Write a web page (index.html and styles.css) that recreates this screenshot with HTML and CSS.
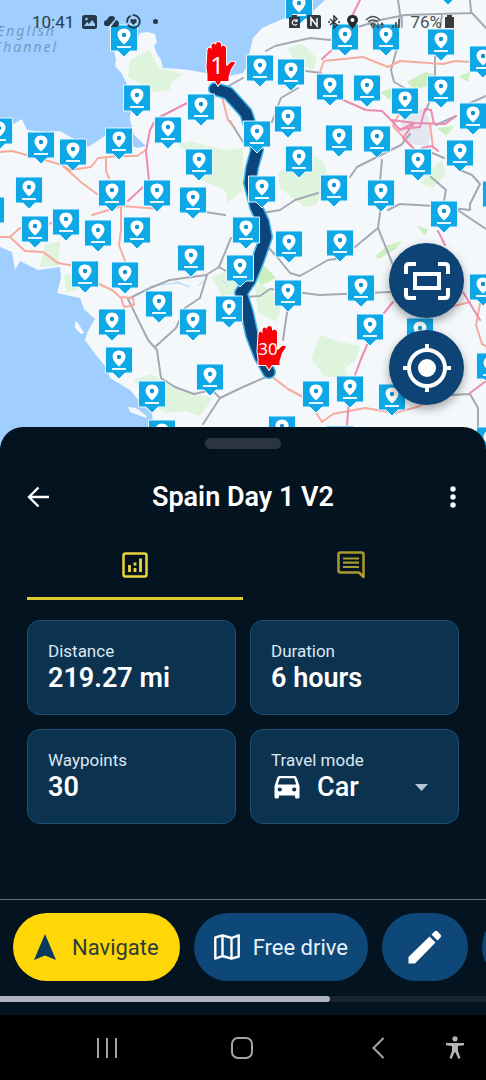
FILE: index.html
```html
<!DOCTYPE html>
<html lang="en">
<head>
    <meta charset="UTF-8">
    <meta name="viewport" content="width=device-width, initial-scale=1">
    <title>Spain Day 1 V2</title>
    <link rel="stylesheet" href="styles.css">
</head>
<body>

    <section class="map">
        <svg class="map-canvas" viewBox="0 0 486 457" preserveAspectRatio="xMidYMin slice" role="img" aria-label="Route map">
            <defs>
                <g id="m">
                    <path d="M-13.5 0H13.5V26H6L0 32L-6 26H-13.5Z" fill="#0fa8e6" stroke="#e4f6ff" stroke-width="1"/>
                    <path d="M0 3.5C-3.9 3.5-6.5 6.3-6.5 9.8C-6.5 14 0 19.5 0 19.5S6.5 14 6.5 9.8C6.5 6.3 3.9 3.5 0 3.5Z" fill="#fff"/>
                    <circle cx="0" cy="10" r="2.2" fill="#0f94d0"/>
                    <path d="M-7 22H7" stroke="#fff" stroke-width="1.8"/>
                </g>
                <path id="hand" d="M2.5 8Q3 5.5 4.5 5.5Q6 5.5 6.5 8V3.5Q7 1.5 8.5 1.5Q10.5 1.5 10.8 3.5V2Q11.5 0 13.5 0Q15.5 0 16 2V5Q17 3.5 18.5 3.5Q20.5 3.5 21 6V23L22 24L26 20Q28.5 19 30 21L26 27L23.5 35V39H16L13 43.5L10 39H2.5V33L1.5 25Z"/>
            </defs>

            <rect width="486" height="457" fill="#f5f8fb"/>

            <!-- water -->
            <g fill="#9fceff">
                <path d="M0 0H325L312 12L285 18L262 28L253 38L249 55L246 68L243 73L225 77L195 71L180 69L163 68L161 60L156 52L154 46L157 42L155 34L148 32L140 33L137 40L120 34L109 27L113 45L116 60L115 66L122 74L127 84L131 105L130 120L134 135L146 146L137 148L120 140L105 136L88 147L60 131L45 132L27 130L22 119L12 125L0 128Z"/>
                <path d="M0 247L12 252L15 270L20 261L38 270L60 267L61 278L57 293L80 298L84 309L95 319L88 331L85 340L96 355L105 366L110 378L130 390L140 402L152 414L158 457H0Z"/>
            </g>
            <g fill="#f5f8fb">
                <path d="M75 321L78 323L84 333L81 334L75 328Z"/>
                <path d="M128 407L136 408L147 416L146 418L130 412Z"/>
            </g>

            <!-- forests and parks -->
            <g fill="#dff4dd">
                <path d="M130 60L150 50L158 67L184 74L172 81L170 90L154 92L140 84L128 77Z"/>
                <path d="M178 145L190 141L208 146L225 150L243 148V190L228 203L225 190L200 180L192 156Z"/>
                <path d="M278 172L300 164L312 154L325 164L328 182L316 205L305 207L280 188Z"/>
                <path d="M45 245L60 241L58 266L40 267Z M64 275L78 273L82 288L66 293Z"/>
                <path d="M133 380L150 374L175 386L192 393L213 398L200 416L185 411L167 413L150 404Z"/>
                <path d="M211 277L225 272L240 279L236 294L222 296Z"/>
                <path d="M320 335L338 341L360 346L356 360L345 368L348 377L325 377L311 359Z"/>
                <path d="M254 280L270 290L282 305L276 322L258 312Z"/>
                <path d="M288 48L302 44L317 58L314 70L295 64Z M430 170L442 160L446 175L432 188L420 184Z"/>
            </g>
            <g fill="#cdeec0">
                <path d="M407 82L425 72L436 74L432 84L415 90Z M458 76L470 72L468 82Z M380 92L394 88L390 100Z M437 128L454 126L446 136Z"/>
                <path d="M254 277L264 265L276 278L262 285Z M376 256L388 245L402 241L396 249L378 259Z M417 226L428 229L425 236Z"/>
            </g>
            <path d="M404 112L424 108L432 126L428 146L410 144L400 130Z" fill="#e3e7f1"/>
            <g class="stream">
                <path d="M150 286L178 283L190 287M175 281L190 287M198 286L204 281M222 280L228 286"/>
            </g>

            <!-- roads -->
            <g class="road trunk">
                <path d="M266 51L275 46L310 38L330 40L352 29L380 20L405 15L472 13L486 28M398 0L400 14L398 45L391 70L394 82L408 90M470 0L471 12M442 15L435 58V90L425 112M306 71L321 73"/>
                <path d="M225 88L243 78M230 121L243 142M298 88L281 98L272 122M486 96L468 104M456 116L436 125"/>
                <path d="M410 134L401 145L387 152L357 167L350 177M318 193L295 200L280 210L262 213M382 160L380 181V213L378 228L395 270M388 210L400 204L434 206L470 210M430 152L444 158M460 170L472 175L480 184L470 204V210M431 177L446 190L444 201L486 229"/>
                <path d="M205 212L225 215M231 238L219 267L206 275L170 280L150 288L128 299M207 275L200 298L185 308L176 328L155 347M128 299L148 340L157 350L161 378L175 387L194 394L212 390L220 398L203 424M220 398L243 387L266 377M219 267L233 275L241 290M266 245L278 258L290 273L300 276L328 260L343 258M355 247L378 228M245 297L260 296L270 289L320 295L390 292M288 306L283 340M451 395L470 394L478 408V430"/>
            </g>
            <g class="road main">
                <path d="M0 152L12 151L45 160L62 165L70 170L91 167L98 158L119 156L137 156L146 150M62 165L82 183L97 194M106 158V171L109 178M92 215L122 206L160 209M121 207V230L119 245L125 261M0 237L10 237L25 251L43 252L58 263L75 266M10 237L20 228L60 222M97 283L112 290L120 297L133 298L134 305L124 307L121 298M221 93L228 120L232 125M320 72L324 61L363 57L388 67L400 61L443 64L455 61L470 62"/>
                <path d="M266 372L288 389L303 397L315 411L322 422L333 414L365 408L395 413L420 406L435 395M481 298L476 325L482 344L486 346M450 307L470 302M400 112L393 126L415 150M430 124L433 148"/>
            </g>
            <g class="road motorway">
                <path d="M128 201L143 187M149 181L146 151L150 130L156 119L189 102L200 95M360 0L353 14M322 59L334 48M343 100L366 110L382 111L391 120L415 123L445 124L456 116M391 120L400 130L414 123L403 138L415 150M400 129L420 127L425 109L431 110L434 124M422 148L432 146L438 151M367 345L361 359L355 375M349 400L347 425M393 302L384 313M463 292L480 320M438 231L445 245M486 381L470 393"/>
            </g>

            <!-- planned route -->
            <path class="route-edge" d="M215 89L228 93L238 104L246 113L251 128L257 150L252 168L250 183L256 207L263 222L266 237L258 260L250 280L241 293L247 312L252 335L260 356L269 372"/>
            <path class="route-line" d="M215 89L228 93L238 104L246 113L251 128L257 150L252 168L250 183L256 207L263 222L266 237L258 260L250 280L241 293L247 312L252 335L260 356L269 372"/>
            <circle cx="269" cy="372" r="5" fill="#124678"/>

            <text class="sea-label" x="-3" y="36">English</text>
            <text class="sea-label" x="-7" y="52">Channel</text>

            <!-- waypoint markers -->
            <use href="#m" x="124" y="25"/><use href="#m" x="137" y="85"/><use href="#m" x="201" y="94"/>
            <use href="#m" x="168" y="117"/><use href="#m" x="119" y="128"/><use href="#m" x="-1" y="118"/>
            <use href="#m" x="41" y="132"/><use href="#m" x="73" y="139"/><use href="#m" x="199" y="149"/>
            <use href="#m" x="29" y="177"/><use href="#m" x="112" y="180"/><use href="#m" x="157" y="180"/>
            <use href="#m" x="193" y="187"/><use href="#m" x="-9" y="197"/><use href="#m" x="66" y="209"/>
            <use href="#m" x="299" y="-7"/><use href="#m" x="448" y="-27"/><use href="#m" x="345" y="24"/>
            <use href="#m" x="386" y="24"/><use href="#m" x="441" y="29"/><use href="#m" x="483" y="46"/>
            <use href="#m" x="260" y="55"/><use href="#m" x="291" y="59"/><use href="#m" x="330" y="74"/>
            <use href="#m" x="367" y="75"/><use href="#m" x="405" y="88"/><use href="#m" x="441" y="76"/>
            <use href="#m" x="473" y="103"/><use href="#m" x="288" y="106"/><use href="#m" x="257" y="121"/>
            <use href="#m" x="339" y="125"/><use href="#m" x="377" y="126"/><use href="#m" x="460" y="140"/>
            <use href="#m" x="418" y="149"/><use href="#m" x="299" y="146"/><use href="#m" x="262" y="176"/>
            <use href="#m" x="334" y="175"/><use href="#m" x="381" y="180"/><use href="#m" x="496" y="181"/>
            <use href="#m" x="444" y="201"/><use href="#m" x="35" y="216"/><use href="#m" x="98" y="220"/>
            <use href="#m" x="137" y="217"/><use href="#m" x="246" y="217"/><use href="#m" x="191" y="245"/>
            <use href="#m" x="240" y="255"/><use href="#m" x="85" y="261"/><use href="#m" x="125" y="262"/>
            <use href="#m" x="159" y="291"/><use href="#m" x="229" y="296"/><use href="#m" x="112" y="309"/>
            <use href="#m" x="193" y="309"/><use href="#m" x="119" y="347"/><use href="#m" x="210" y="364"/>
            <use href="#m" x="152" y="381"/><use href="#m" x="162" y="420"/><use href="#m" x="289" y="231"/>
            <use href="#m" x="340" y="230"/><use href="#m" x="288" y="280"/><use href="#m" x="361" y="275"/>
            <use href="#m" x="483" y="274"/><use href="#m" x="370" y="314"/><use href="#m" x="420" y="318"/>
            <use href="#m" x="490" y="353"/><use href="#m" x="316" y="381"/><use href="#m" x="350" y="376"/>
            <use href="#m" x="392" y="384"/><use href="#m" x="282" y="416"/><use href="#m" x="340" y="426"/>
            <use href="#m" x="490" y="427"/>

            <!-- start and end -->
            <use class="hand" href="#hand" x="205" y="42"/>
            <text class="hand-label hand-label-big" x="217" y="74">1</text>
            <use class="hand" href="#hand" x="256" y="326"/>
            <text class="hand-label" x="268" y="355">30</text>
        </svg>

        <div class="statusbar">
            <span class="clock">10:41</span>
            <svg width="15" height="14" viewBox="0 0 15 14"><rect width="15" height="14" rx="2.5" fill="#26394b"/><path d="M2 11L5 7L7 9L10 5L13 9V11Z" fill="#9fceff"/><circle cx="4.5" cy="4" r="1.3" fill="#9fceff"/></svg>
            <svg width="17" height="13" viewBox="0 0 17 13"><path d="M1 8Q1 5 4 5Q5 1 9 1Q12 1 12 4L6 11H3Q1 11 1 8Z M8 12L13 5Q16 6 16 9Q16 12 13 12Z" fill="#26394b"/></svg>
            <svg width="15" height="15" viewBox="0 0 15 15"><circle cx="7.5" cy="7.5" r="6.3" fill="none" stroke="#26394b" stroke-width="1.8" stroke-dasharray="16 2 8 2"/><path d="M7.5 11L4.5 8Q4 5 6 5Q7 5 7.5 6Q8 5 9 5Q11 5 10.5 8Z" fill="#26394b"/></svg>
            <svg class="more-dot" width="5" height="5" viewBox="0 0 5 5"><circle cx="2.5" cy="2.5" r="2.5" fill="#26394b"/></svg>
            <div class="status-right">
                <svg width="11" height="13" viewBox="0 0 11 13"><path d="M0 2H3V0H8V2H11V13H0Z" fill="#333a3f"/><path d="M8 6A2.6 2.6 0 1 0 8 9M8 4V6.5H6" fill="none" stroke="#fff" stroke-width="1.1"/></svg>
                <svg width="14" height="14" viewBox="0 0 14 14"><rect width="14" height="14" rx="2" fill="#333a3f"/><path d="M4 11V3L10 11V3" fill="none" stroke="#fff" stroke-width="1.5"/></svg>
                <svg width="12" height="14" viewBox="0 0 12 14"><path d="M2 4L9 10L6 13V1L9 4L2 10M0 7H2M10 7H12" fill="none" stroke="#333a3f" stroke-width="1.5"/></svg>
                <svg width="11" height="14" viewBox="0 0 11 14"><path d="M5.5 0Q0 0 0 5.5Q1 9 5.5 14Q10 9 11 5.5Q11 0 5.5 0Z" fill="#26292d"/><circle cx="5.5" cy="5" r="2" fill="#fff"/></svg>
                <svg width="20" height="14" viewBox="0 0 20 14"><path d="M1 5Q8-2 15 5M3 7Q8 3 13 7M5.5 9.5Q8 8 10.5 9.5" fill="none" stroke="#4a5156" stroke-width="1.6"/><path d="M8 13L6 10H10ZM13 13V8M17 8V13M11.5 11L13 13L14.5 11M15.5 10L17 8L18.5 10" fill="none" stroke="#4a5156" stroke-width="1.2"/></svg>
                <svg width="11" height="13" viewBox="0 0 11 13"><path d="M1 13V10M4 13V7M7 13V4" stroke="#4a5156" stroke-width="1.8"/><path d="M10 13V1" stroke="#a9b0b6" stroke-width="1.8"/></svg>
                <span class="battery-text">76%</span>
                <svg width="9" height="13" viewBox="0 0 9 13"><path d="M0 2H2V0H7V2H9V13H0Z" fill="#3c3c3c"/></svg>
            </div>
        </div>

        <div class="map-controls">
            <button class="map-btn" type="button" aria-label="Fit route">
                <svg width="46" height="38" viewBox="0 0 46 38" fill="none" stroke="#fff" stroke-width="4"><path d="M2 12V5Q2 2 5 2H12M34 2H41Q44 2 44 5V12M44 26V33Q44 36 41 36H34M12 36H5Q2 36 2 33V26"/><rect x="11" y="12" width="24" height="14"/></svg>
            </button>
            <button class="map-btn" type="button" aria-label="My location">
                <svg width="50" height="50" viewBox="0 0 50 50" fill="none" stroke="#fff" stroke-width="4"><circle cx="25" cy="25" r="18"/><circle cx="25" cy="25" r="9" fill="#fff" stroke="none"/><path d="M25 1V8M25 42V49M1 25H8M42 25H49"/></svg>
            </button>
        </div>
    </section>

    <main class="sheet">
        <div class="handle"></div>

        <header class="sheet-header">
            <button class="icon-btn" type="button" aria-label="Back">
                <svg width="22" height="22" viewBox="0 0 22 22" fill="none" stroke="#fff" stroke-width="2.4"><path d="M22 11H2M11.5 1.5L2 11L11.5 20.5"/></svg>
            </button>
            <h1>Spain Day 1 V2</h1>
            <button class="icon-btn icon-btn-end" type="button" aria-label="More options">
                <svg width="6" height="22" viewBox="0 0 6 22" fill="#fff"><circle cx="3" cy="3" r="2.7"/><circle cx="3" cy="11" r="2.7"/><circle cx="3" cy="19" r="2.7"/></svg>
            </button>
        </header>

        <div class="tabs">
            <button class="tab active" type="button" aria-label="Statistics">
                <svg width="26" height="26" viewBox="0 0 26 26" fill="none" stroke="#e9d53c"><rect x="1.5" y="1.5" width="23" height="23" rx="2" stroke-width="2.5"/><path d="M7.5 20V13M13 20V16M13 13.5V10.5M18.5 20V6.5" stroke-width="2.8"/></svg>
            </button>
            <button class="tab" type="button" aria-label="Comments">
                <svg width="28" height="28" viewBox="0 0 28 28" fill="none" stroke="#a99b30" stroke-width="2.5"><path d="M26.5 26V3.5Q26.5 1.5 24.5 1.5H3.5Q1.5 1.5 1.5 3.5V19.5Q1.5 21.5 3.5 21.5H22Z" stroke-linejoin="round"/><path d="M6 7.5H22M6 11.7H22M6 16H22" stroke-width="2.2"/></svg>
            </button>
        </div>

        <div class="stats">
            <div class="card">
                <span class="label">Distance</span>
                <span class="value">219.27 mi</span>
            </div>
            <div class="card">
                <span class="label">Duration</span>
                <span class="value">6 hours</span>
            </div>
            <div class="card">
                <span class="label">Waypoints</span>
                <span class="value">30</span>
            </div>
            <div class="card">
                <label class="label" for="mode">Travel mode</label>
                <div class="mode">
                    <svg width="26" height="23" viewBox="0 0 26 23"><path d="M22.8 2Q22.2 0 20.5 0H5.5Q3.8 0 3.2 2L.5 10V21Q.5 22.5 2 22.5H3.5Q5 22.5 5 21V19.5H21V21Q21 22.5 22.5 22.5H24Q25.5 22.5 25.5 21V10Z" fill="#fff"/><path d="M5.8 2.2H20.2L22.2 8.5H3.8Z" fill="#0b324e"/><circle cx="5.8" cy="13.5" r="2.1" fill="#0b324e"/><circle cx="20.2" cy="13.5" r="2.1" fill="#0b324e"/></svg>
                    <select id="mode">
                        <option>Car</option>
                        <option>Bike</option>
                        <option>Walk</option>
                    </select>
                    <svg class="caret" width="13" height="7" viewBox="0 0 13 7"><path d="M0 0H13L6.5 7Z" fill="#b6c4d3"/></svg>
                </div>
            </div>
        </div>

        <div class="actions">
            <button class="pill primary" type="button">
                <svg width="22" height="26" viewBox="0 0 22 26"><path d="M11 0L22 26L11 21.5L0 26Z" fill="#0b3a5c"/></svg>
                Navigate
            </button>
            <button class="pill" type="button">
                <svg width="26" height="26" viewBox="0 0 26 26" fill="none" stroke="#fff" stroke-width="2.4" stroke-linejoin="round"><path d="M1.3 3.5L8.5 1.3L17.5 4L24.7 1.3V22.5L17.5 24.7L8.5 22L1.3 24.7ZM8.5 1.3V22M17.5 4V24.7"/></svg>
                Free drive
            </button>
            <button class="pill" type="button" aria-label="Edit">
                <svg width="34" height="34" viewBox="0 0 34 34" fill="#fff"><path d="M.5 27L21.5 6.5L27.5 12.5L7 33.5H.5ZM23.5 4.5L26.5 1.5Q28 0 29.5 1.5L32.5 4.5Q34 6 32.5 7.5L29.5 10.5Z"/></svg>
            </button>
            <button class="pill" type="button" aria-label="Share">
                <svg width="34" height="34" viewBox="0 0 34 34" fill="none" stroke="#fff" stroke-width="3"><path d="M10 17L24 8M10 17L24 26"/></svg>
            </button>
        </div>
        <div class="scrollbar"><div class="scroll-thumb"></div></div>
    </main>

    <nav class="navbar">
        <button type="button" aria-label="Recent apps">
            <svg width="20" height="20" viewBox="0 0 20 20" stroke="#a5a5a5" stroke-width="2"><path d="M1 0V20M10 0V20M19 0V20"/></svg>
        </button>
        <button type="button" aria-label="Home">
            <svg width="22" height="22" viewBox="0 0 22 22" fill="none" stroke="#a5a5a5" stroke-width="2"><rect x="1" y="1" width="20" height="20" rx="6"/></svg>
        </button>
        <button type="button" aria-label="Back">
            <svg width="12" height="22" viewBox="0 0 12 22" fill="none" stroke="#a5a5a5" stroke-width="2"><path d="M11.5 1L1.5 11L11.5 21"/></svg>
        </button>
        <button class="access" type="button" aria-label="Accessibility">
            <svg width="18" height="23" viewBox="0 0 18 23" fill="#b5b5b5"><circle cx="9" cy="2.8" r="2.6"/><path d="M0 7H18V9.2L12 10V15L14.5 22L12.5 23L9.5 16.5H8.5L5.5 23L3.5 22L6 15V10L0 9.2Z"/></svg>
        </button>
    </nav>

</body>
</html>
```
FILE: styles.css
```css
* {box-sizing: border-box;}
body {margin: 0; min-height: 100vh; display: flex; flex-direction: column; background: #000; color: #fff; font-family: Roboto, "Liberation Sans", sans-serif;}
button {border: 0; padding: 0; background: none; color: inherit; font: inherit; cursor: pointer;}
svg {display: block; flex: none;}

/* map */
.map {position: relative; height: 457px; overflow: hidden; background: #f5f8fb;}
.map-canvas {width: 100%; height: 100%;}
.road {fill: none; stroke-linejoin: round; stroke-linecap: round;}
.trunk {stroke: #a4a9b4; stroke-width: 2;}
.main {stroke: #f7ab9f; stroke-width: 2;}
.motorway {stroke: #ec8bb0; stroke-width: 2;}
.stream {fill: none; stroke: #b5d6fa; stroke-width: 1;}
.route-edge, .route-line {fill: none; stroke-linejoin: round; stroke-linecap: round;}
.route-edge {stroke: #45b6ea; stroke-width: 14;}
.route-line {stroke: #0c457b; stroke-width: 11;}
.sea-label {font: italic 14px "Noto Sans", sans-serif; letter-spacing: 2px; fill: #7598c2;}
.hand {fill: #f80209; stroke: #fff; stroke-width: 2; paint-order: stroke;}
.hand-label {font: 17px "Noto Sans", sans-serif; fill: #fff; text-anchor: middle;}
.hand-label-big {font-size: 24px;}

.statusbar {position: absolute; top: 0; left: 0; right: 0; height: 43px; padding: 0 32px; display: flex; align-items: center; gap: 6px; font-size: 17px; color: #2b3d4f;}
.clock {margin-right: 2px;}
.more-dot {margin-left: 6px;}
.status-right {margin-left: auto; display: flex; align-items: center; gap: 7px; color: #4a4f54;}
.battery-text {margin-right: -4px;}

.map-controls {position: absolute; top: 243px; right: 22px; display: flex; flex-direction: column; gap: 12px;}
.map-btn {width: 75px; height: 75px; border-radius: 50%; background: #0d4475; display: flex; align-items: center; justify-content: center; box-shadow: 0 4px 10px rgba(0, 0, 0, 0.35);}

/* bottom sheet */
.sheet {position: relative; flex: 1; margin-top: -30px; background: #03131f; border-radius: 23px 23px 0 0; display: flex; flex-direction: column;}
.handle {width: 76px; height: 11px; margin: 11px auto 0; border-radius: 6px; background: #2b3541;}
.sheet-header {display: grid; grid-template-columns: 48px 1fr 48px; align-items: center; padding: 0 27px; margin-top: 28px;}
.sheet-header h1 {margin: 0; font-size: 27px; line-height: 40px; font-weight: 600; text-align: center;}
.icon-btn {height: 40px; display: flex; align-items: center;}
.icon-btn-end {justify-content: flex-end; padding-right: 3px;}

.tabs {display: grid; grid-template-columns: 1fr 1fr; padding: 0 27px; margin-top: 16px;}
.tab {height: 67px; display: flex; align-items: center; justify-content: center; border-bottom: 3px solid transparent;}
.tab.active {border-bottom-color: #dfc92f;}

.stats {display: grid; grid-template-columns: repeat(2, minmax(0, 1fr)); gap: 14px; padding: 20px 27px 0;}
.card {height: 95px; padding: 19px 20px 0; background: #0b324e; border: 1px solid #1e5075; border-radius: 13px; display: flex; flex-direction: column;}
.label {font-size: 17px; line-height: 22px; color: #dce8f2;}
.value {font-size: 27px; line-height: 32px; font-weight: 600; color: #fff;}
.mode {display: flex; align-items: center; height: 32px; padding: 0 10px 0 3px;}
.mode select {flex: 1; min-width: 0; margin-left: 17px; padding: 0; border: 0; background: transparent; appearance: none; font: 500 27px/32px Roboto, sans-serif; color: #fff;}
.caret {pointer-events: none;}

.actions {display: flex; gap: 14px; margin-top: auto; padding: 13px 13px 0; border-top: 1px solid #63717c; overflow: hidden;}
.pill {flex: none; height: 68px; padding: 0 20px; border-radius: 34px; background: #0d4878; color: #e6f1fb; display: flex; align-items: center; gap: 13px; font-size: 22px;}
.pill.primary {background: #ffd707; color: #2c3b3b; gap: 16px; padding: 0 21px;}
.pill[aria-label] {padding: 0 26px;}
.scrollbar {height: 6px; margin: 15px 0 13px; background: #1a2430;}
.scroll-thumb {width: 68%; height: 6px; border-radius: 0 3px 3px 0; background: #adb2bc;}

/* system navigation */
.navbar {height: 65px; display: grid; grid-template-columns: 136fr 136fr 136fr 40fr; padding-left: 8%; background: #000;}
.navbar button {display: flex; align-items: center; justify-content: center;}
.navbar .access {justify-content: flex-start;}
```
